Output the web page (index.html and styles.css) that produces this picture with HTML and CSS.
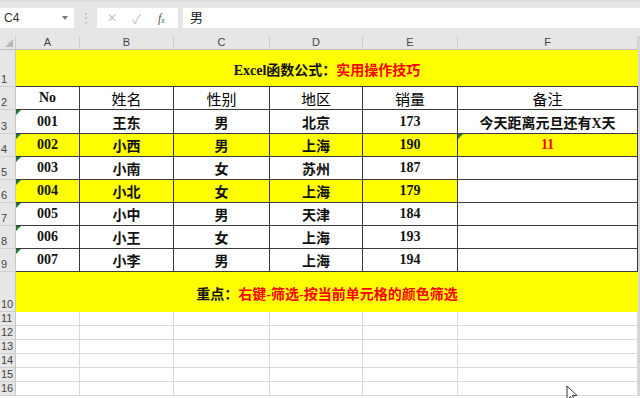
FILE: index.html
```html
<!DOCTYPE html>
<html lang="zh-CN">
<head>
<meta charset="utf-8">
<link rel="stylesheet" href="styles.css">
</head>
<body>
<div class="app">
  <div class="toolbar">
    <div class="namebox"><span>C4</span><span class="caret"></span></div>
    <div class="sep">⋮</div>
    <div class="fxbox">
      <span class="ic x">✕</span>
      <span class="ic ok">✓</span>
      <span class="ic fx">f<sub>x</sub></span>
    </div>
    <div class="formula">男</div>
  </div>

  <div class="sheet">
    <div class="corner"><span class="tri"></span></div>
    <div class="ch">A</div><div class="ch">B</div><div class="ch">C</div><div class="ch">D</div><div class="ch">E</div><div class="ch">F</div>

    <div class="rh">1</div>
    <div class="banner"><span>Excel函数公式：</span><span class="red">实用操作技巧</span></div>

    <div class="rh">2</div>
    <div class="d">No</div><div class="d hd">姓名</div><div class="d hd">性别</div><div class="d hd">地区</div><div class="d hd">销量</div><div class="d hd">备注</div>

    <div class="rh">3</div>
    <div class="d g">001</div><div class="d">王东</div><div class="d">男</div><div class="d">北京</div><div class="d">173</div><div class="d">今天距离元旦还有X天</div>

    <div class="rh">4</div>
    <div class="d y g">002</div><div class="d y">小西</div><div class="d y">男</div><div class="d y">上海</div><div class="d y">190</div><div class="d y g red">11</div>

    <div class="rh">5</div>
    <div class="d g">003</div><div class="d">小南</div><div class="d">女</div><div class="d">苏州</div><div class="d">187</div><div class="d"></div>

    <div class="rh">6</div>
    <div class="d y g">004</div><div class="d y">小北</div><div class="d y">女</div><div class="d y">上海</div><div class="d y">179</div><div class="d"></div>

    <div class="rh">7</div>
    <div class="d g">005</div><div class="d">小中</div><div class="d">男</div><div class="d">天津</div><div class="d">184</div><div class="d"></div>

    <div class="rh">8</div>
    <div class="d g">006</div><div class="d">小王</div><div class="d">女</div><div class="d">上海</div><div class="d">193</div><div class="d"></div>

    <div class="rh">9</div>
    <div class="d g">007</div><div class="d">小李</div><div class="d">男</div><div class="d">上海</div><div class="d">194</div><div class="d"></div>

    <div class="rh">10</div>
    <div class="banner b2"><span>重点：</span><span class="red">右键-筛选-按当前单元格的颜色筛选</span></div>

    <div class="rh">11</div><div class="e"></div><div class="e"></div><div class="e"></div><div class="e"></div><div class="e"></div><div class="e"></div>
    <div class="rh">12</div><div class="e"></div><div class="e"></div><div class="e"></div><div class="e"></div><div class="e"></div><div class="e"></div>
    <div class="rh">13</div><div class="e"></div><div class="e"></div><div class="e"></div><div class="e"></div><div class="e"></div><div class="e"></div>
    <div class="rh">14</div><div class="e"></div><div class="e"></div><div class="e"></div><div class="e"></div><div class="e"></div><div class="e"></div>
    <div class="rh">15</div><div class="e"></div><div class="e"></div><div class="e"></div><div class="e"></div><div class="e"></div><div class="e"></div>
    <div class="rh">16</div><div class="e"></div><div class="e"></div><div class="e"></div><div class="e"></div><div class="e"></div><div class="e"></div>
  </div>

  <svg class="cursor" width="12" height="18" viewBox="0 0 12 18">
    <path d="M1 1 L1 15 L4.5 11.5 L7 17 L9 16 L6.5 10.5 L11 10.5 Z" fill="#fff" stroke="#333" stroke-width="1"/>
  </svg>
</div>
</body>
</html>
```
FILE: styles.css
```css
* { box-sizing: border-box; }
html, body { margin: 0; padding: 0; }
body {
  width: 640px;
  height: 398px;
  overflow: hidden;
  background: #fff;
  font-family: "Liberation Sans", "Noto Sans CJK SC", sans-serif;
}
.app { position: relative; width: 640px; height: 398px; }

.toolbar {
  height: 36px;
  background: #e6e6e6;
  border-top: 2px solid #dcdcdc;
  padding-top: 6px;
  display: flex;
  align-items: flex-start;
}
.namebox {
  width: 74px;
  height: 20px;
  background: #fff;
  display: flex;
  align-items: center;
  justify-content: space-between;
  padding: 0 6px 0 4px;
  font-size: 12px;
  color: #333;
}
.caret {
  width: 0; height: 0;
  border-left: 3px solid transparent;
  border-right: 3px solid transparent;
  border-top: 4px solid #777;
}
.sep {
  width: 23px;
  height: 20px;
  display: flex;
  align-items: center;
  justify-content: center;
  color: #b4b4b4;
  font-size: 12px;
}
.fxbox {
  width: 81px;
  height: 20px;
  background: #fff;
  display: flex;
  align-items: center;
  padding-left: 9px;
}
.ic { display: inline-block; text-align: center; }
.x { width: 26px; color: #c4c4c4; font-size: 12px; text-align: left; padding-left: 1px; }
.ok { width: 26px; color: #c4c4c4; font-size: 13px; text-align: left; }
.fx { font-family: "Liberation Serif", serif; font-style: italic; font-size: 12px; color: #555; }
.fx sub { font-size: 8px; vertical-align: -1px; }
.formula {
  margin-left: 5px;
  flex: 1;
  height: 20px;
  background: #fff;
  padding-left: 7px;
  font-size: 13px;
  line-height: 20px;
  color: #222;
}

.sheet {
  display: grid;
  grid-template-columns: 16px 64px 94px 96px 93px 95px 180px;
  grid-template-rows: 14px 37px 23px 24px 23px 23px 23px 23px 23px 23px 40px 14px 14px 14px 14px 14px 14px;
  width: 640px;
  background: #fff;
  border-right: 2px solid #d6d6d6;
}
.corner {
  background: #e6e6e6;
  border-right: 1px solid #cfcfcf;
  border-bottom: 1px solid #bdbdbd;
  position: relative;
}
.tri {
  position: absolute;
  right: 2px; bottom: 2px;
  width: 0; height: 0;
  border-left: 8px solid transparent;
  border-bottom: 8px solid #b8b8b8;
}
.ch {
  background: #e6e6e6;
  border-right: 1px solid #cfcfcf;
  border-bottom: 1px solid #bdbdbd;
  display: flex;
  align-items: center;
  justify-content: center;
  font-size: 11px;
  color: #444;
  line-height: 1;
}
.rh {
  background: #e6e6e6;
  border-right: 1px solid #c6c6c6;
  border-bottom: 1px solid #cfcfcf;
  display: flex;
  align-items: flex-end;
  padding-left: 1px;
  font-size: 11px;
  line-height: 13px;
  color: #444;
}
.banner {
  grid-column: 2 / 8;
  background: #ffff00;
  border-bottom: 1px solid #3a3a3a;
  display: flex;
  align-items: center;
  justify-content: center;
  font-family: "Liberation Serif", "Noto Sans CJK SC", serif;
  font-weight: bold;
  font-size: 14px;
  color: #111;
  padding-top: 2px;
}
.b2 { border-bottom: none; }
.red { color: #ff0000; }
.d {
  border-right: 1px solid #3a3a3a;
  border-bottom: 1px solid #3a3a3a;
  display: flex;
  align-items: center;
  justify-content: center;
  font-family: "Liberation Serif", "Noto Sans CJK SC", serif;
  font-weight: bold;
  font-size: 14px;
  color: #111;
  position: relative;
}
.d.hd { font-weight: normal; font-size: 15px; color: #000; }
.d.y { background: #ffff00; }
.d.red { color: #ff0000; }
.g::before {
  content: "";
  position: absolute;
  left: 0; top: 0;
  width: 0; height: 0;
  border-top: 5px solid #1f7a3a;
  border-right: 5px solid transparent;
}
.e {
  border-right: 1px solid #dadada;
  border-bottom: 1px solid #dadada;
}
.cursor {
  position: absolute;
  left: 566px;
  top: 385px;
}
```
